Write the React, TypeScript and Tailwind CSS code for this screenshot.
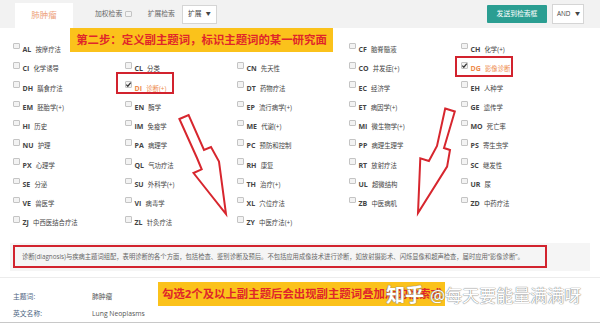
import React from 'react';

const rows: string[][] = [
  ['AL 按摩疗法', '', '', 'CF 脑脊髓液', 'CH 化学(+)'],
  ['CI 化学诱导', 'CL 分类', 'CN 先天性', 'CO 并发症(+)', 'DG 影像诊断'],
  ['DH 膳食疗法', 'DI 诊断(+)', 'DT 药物疗法', 'EC 经济学', 'EH 人种学'],
  ['EM 胚胎学(+)', 'EN 酶学', 'EP 流行病学(+)', 'ET 病因学(+)', 'GE 遗传学'],
  ['HI 历史', 'IM 免疫学', 'ME 代谢(+)', 'MI 微生物学(+)', 'MO 死亡率'],
  ['NU 护理', 'PA 病理学', 'PC 预防和控制', 'PP 病理生理学', 'PS 寄生虫学'],
  ['PX 心理学', 'QL 气功疗法', 'RH 康复', 'RT 放射疗法', 'SC 继发性'],
  ['SE 分泌', 'SU 外科学(+)', 'TH 治疗(+)', 'UL 超微结构', 'UR 尿'],
  ['VE 兽医学', 'VI 病毒学', 'XL 穴位疗法', 'ZB 中医病机', 'ZD 中药疗法'],
  ['ZJ 中西医结合疗法', 'ZL 针灸疗法', 'ZY 中医疗法(+)', '', '']
];

const checked = ['DG', 'DI'];

const Box = ({ on }: { on?: boolean }) => (
  <span className="relative flex h-[6.5px] w-[6.5px] shrink-0 items-center justify-center rounded-[1px] border border-[#c4c4c4] bg-[#f3f3f3]">
    {on && (
      <svg viewBox="0 0 8 8" className="absolute h-[7px] w-[7px]">
        <path d="M1.5 4.2 L3.2 6 L6.6 1.8" fill="none" stroke="#333" strokeWidth="1.4" />
      </svg>
    )}
  </span>
);

const Item = ({ label }: { label: string }) => {
  if (!label) return <div />;
  const [code, ...rest] = label.split(' ');
  const on = checked.includes(code);
  return (
    <div className="flex items-center">
      <Box on={on} />
      <span
        className={`ml-[3px] whitespace-nowrap ${on ? 'text-[#ee8a4a]' : 'text-[#444]'}`}
      >
        <span className="text-[7px] font-bold">{code}</span>{' '}
        <span className="text-[6.4px]">{rest.join(' ')}</span>
      </span>
    </div>
  );
};

export default function App() {
  return (
    <div className="relative h-[323px] w-[600px] overflow-hidden bg-white font-['Open_Sans','Noto_Sans_CJK_SC',sans-serif]">
      {/* toolbar */}
      <div className="flex h-[28px] items-center bg-[#f2f2f2]">
        <div className="ml-[15px] flex h-[25px] w-[58px] items-center justify-center self-end bg-white text-[8.5px] text-[#eda27c]">
          肺肿瘤
        </div>
        <span className="ml-[22px] text-[6.8px] text-[#666]">加权检索</span>
        <span className="ml-[3px]">
          <Box />
        </span>
        <span className="ml-[16px] text-[6.8px] text-[#666]">扩展检索</span>
        <div className="ml-[7px] flex h-[19px] w-[35px] items-center justify-between border border-[#d5d5d5] bg-white px-[5px] text-[6.8px] text-[#444]">
          <span>扩展</span>
          <span className="text-[5px]">▼</span>
        </div>
        <div className="ml-auto flex h-[18px] w-[60px] items-center justify-center rounded-[1px] bg-[#2b9e92] text-[6.8px] text-white">
          发送到检索框
        </div>
        <div className="mr-[16px] ml-[5px] flex h-[20px] w-[32px] items-center justify-between border border-[#d5d5d5] bg-white pr-[3px] pl-[4px] text-[6.4px] text-[#444]">
          <span>AND</span>
          <span className="text-[5px]">▼</span>
        </div>
      </div>

      {/* subheading grid */}
      <div className="mt-[8.5px] grid auto-rows-[19.25px] grid-cols-[repeat(5,112px)] pl-[13px]">
        {rows.flat().map((l, i) => (
          <Item key={i} label={l} />
        ))}
      </div>

      {/* scope note */}
      <div className="mx-[10px] mt-[14px] h-[28px] bg-[#f5f5f5] pt-[2px] pl-[3px]">
        <div className="flex h-[23px] w-[534px] items-center border-2 border-[#d2232e] pl-[7px] text-[6.3px] whitespace-nowrap text-[#666]">
          诊断(diagnosis)与疾病主题词组配，表明诊断的各个方面，包括检查、鉴别诊断及预后。不包括应用成像技术进行诊断，如放射摄影术、闪烁显像和超声检查，届时应用“影像诊断”。
        </div>
      </div>

      <div className="mt-[6px] border-t border-[#ececec] pt-[10px] pl-[13px] text-[6.8px]">
        <div className="flex h-[18px] items-center">
          <span className="w-[79px] text-[#4d6682]">主题词:</span>
          <span className="text-[#555]">肺肿瘤</span>
        </div>
        <div className="flex h-[16px] items-center">
          <span className="w-[79px] text-[#4d6682]">英文名称:</span>
          <span className="text-[#555]">Lung Neoplasms</span>
        </div>
      </div>
      <div className="border-b border-[#c8c8c8]" />

      {/* annotations */}
      <div className="absolute top-[28px] left-[70px] flex h-[24px] w-[263px] items-center justify-center bg-[#fbc21b] text-[11.4px] font-bold whitespace-nowrap text-[#e0262a]">
        第二步：定义副主题词，标识主题词的某一研究面
      </div>
      <div className="absolute top-[72px] left-[116px] h-[22px] w-[58px] border-2 border-[#d2232e]" />
      <div className="absolute top-[56px] left-[455px] h-[21px] w-[58px] border-2 border-[#d2232e]" />

      <svg className="pointer-events-none absolute top-0 left-0" width="600" height="323">
        <polygon
          points="179.4,119 188.6,115 204,150 211,147 219,161.6 226,214 193.5,173 201.7,169.3 197,158"
          fill="none"
          stroke="#d7262e"
          strokeWidth="2"
          strokeLinejoin="miter"
        />
        <polygon
          points="445.2,108.5 454.8,111.5 444,148 450,150 447.1,166.6 418,213 420.3,158.4 428.9,161 437,146"
          fill="none"
          stroke="#d7262e"
          strokeWidth="2"
        />
      </svg>

      <div className="absolute top-[282px] left-[158px] flex h-[24px] w-[287px] items-center overflow-hidden bg-[#fbc21b] pl-[4px] text-[11.4px] font-bold whitespace-nowrap text-[#e0262a]">
        勾选2个及以上副主题后会出现副主题词叠加后的检索式
      </div>
      <div className="absolute top-[281px] left-[386px] flex items-center whitespace-nowrap text-white [text-shadow:0_0_1px_#777,0_0_1px_#777]">
        <span className="text-[19px] font-bold">知乎</span>
        <span className="ml-[6px] text-[17px]">@每天要能量满满呀</span>
      </div>
    </div>
  );
}
